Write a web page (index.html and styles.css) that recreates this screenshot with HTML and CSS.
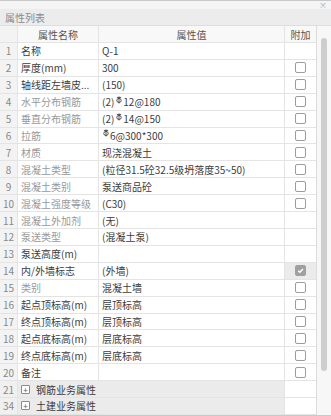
FILE: index.html
```html
<!DOCTYPE html>
<html lang="zh-CN">

<head>
    <meta charset="UTF-8">
    <meta name="viewport" content="width=device-width, initial-scale=1.0">
    <title>属性列表</title>
    <link rel="stylesheet" href="styles.css">
</head>

<body>
    <div class="panel">
        <!-- Top strip with close button -->
        <div class="panel-top">
            <span class="close-btn">×</span>
        </div>

        <!-- Title bar -->
        <div class="panel-title">属性列表</div>

        <div class="panel-body">
            <div class="grid">
                <!-- Header -->
                <div class="row head">
                    <div class="cell idx"></div>
                    <div class="cell name">属性名称</div>
                    <div class="cell value">属性值</div>
                    <div class="cell extra">附加</div>
                </div>

                <div class="rows">
                    <div class="row">
                        <div class="cell idx">1</div>
                        <div class="cell name">名称</div>
                        <div class="cell value">Q-1</div>
                        <div class="cell extra"></div>
                    </div>
                    <div class="row">
                        <div class="cell idx">2</div>
                        <div class="cell name">厚度(mm)</div>
                        <div class="cell value">300</div>
                        <div class="cell extra"><span class="check"></span></div>
                    </div>
                    <div class="row">
                        <div class="cell idx">3</div>
                        <div class="cell name">轴线距左墙皮...</div>
                        <div class="cell value">(150)</div>
                        <div class="cell extra"><span class="check"></span></div>
                    </div>
                    <div class="row">
                        <div class="cell idx">4</div>
                        <div class="cell name public">水平分布钢筋</div>
                        <div class="cell value">(2)<svg class="bar-sym" viewBox="0 0 7 9"><path d="M3.5 0.5v8M1 1.5h5" /><ellipse cx="3.5" cy="5" rx="2.6" ry="2.4" /></svg>12@180</div>
                        <div class="cell extra"><span class="check"></span></div>
                    </div>
                    <div class="row">
                        <div class="cell idx">5</div>
                        <div class="cell name public">垂直分布钢筋</div>
                        <div class="cell value">(2)<svg class="bar-sym" viewBox="0 0 7 9"><path d="M3.5 0.5v8M1 1.5h5" /><ellipse cx="3.5" cy="5" rx="2.6" ry="2.4" /></svg>14@150</div>
                        <div class="cell extra"><span class="check"></span></div>
                    </div>
                    <div class="row">
                        <div class="cell idx">6</div>
                        <div class="cell name public">拉筋</div>
                        <div class="cell value"><svg class="bar-sym lead" viewBox="0 0 7 9"><path d="M3.5 0.5v8M1 1.5h5" /><ellipse cx="3.5" cy="5" rx="2.6" ry="2.4" /></svg>6@300*300</div>
                        <div class="cell extra"><span class="check"></span></div>
                    </div>
                    <div class="row">
                        <div class="cell idx">7</div>
                        <div class="cell name public">材质</div>
                        <div class="cell value">现浇混凝土</div>
                        <div class="cell extra"><span class="check"></span></div>
                    </div>
                    <div class="row">
                        <div class="cell idx">8</div>
                        <div class="cell name public">混凝土类型</div>
                        <div class="cell value">(粒径31.5砼32.5级坍落度35~50)</div>
                        <div class="cell extra"><span class="check"></span></div>
                    </div>
                    <div class="row">
                        <div class="cell idx">9</div>
                        <div class="cell name public">混凝土类别</div>
                        <div class="cell value">泵送商品砼</div>
                        <div class="cell extra"><span class="check"></span></div>
                    </div>
                    <div class="row">
                        <div class="cell idx">10</div>
                        <div class="cell name public">混凝土强度等级</div>
                        <div class="cell value">(C30)</div>
                        <div class="cell extra"><span class="check"></span></div>
                    </div>
                    <div class="row">
                        <div class="cell idx">11</div>
                        <div class="cell name public">混凝土外加剂</div>
                        <div class="cell value">(无)</div>
                        <div class="cell extra"></div>
                    </div>
                    <div class="row">
                        <div class="cell idx">12</div>
                        <div class="cell name public">泵送类型</div>
                        <div class="cell value">(混凝土泵)</div>
                        <div class="cell extra"></div>
                    </div>
                    <div class="row">
                        <div class="cell idx">13</div>
                        <div class="cell name">泵送高度(m)</div>
                        <div class="cell value"></div>
                        <div class="cell extra"></div>
                    </div>
                    <div class="row">
                        <div class="cell idx">14</div>
                        <div class="cell name">内/外墙标志</div>
                        <div class="cell value">(外墙)</div>
                        <div class="cell extra locked"><span class="check checked"><svg viewBox="0 0 10 10"><path d="M2.5 5.2l1.8 1.8 3.4-3.6" /></svg></span></div>
                    </div>
                    <div class="row">
                        <div class="cell idx">15</div>
                        <div class="cell name public">类别</div>
                        <div class="cell value">混凝土墙</div>
                        <div class="cell extra"><span class="check"></span></div>
                    </div>
                    <div class="row">
                        <div class="cell idx">16</div>
                        <div class="cell name">起点顶标高(m)</div>
                        <div class="cell value">层顶标高</div>
                        <div class="cell extra"><span class="check"></span></div>
                    </div>
                    <div class="row">
                        <div class="cell idx">17</div>
                        <div class="cell name">终点顶标高(m)</div>
                        <div class="cell value">层顶标高</div>
                        <div class="cell extra"><span class="check"></span></div>
                    </div>
                    <div class="row">
                        <div class="cell idx">18</div>
                        <div class="cell name">起点底标高(m)</div>
                        <div class="cell value">层底标高</div>
                        <div class="cell extra"><span class="check"></span></div>
                    </div>
                    <div class="row">
                        <div class="cell idx">19</div>
                        <div class="cell name">终点底标高(m)</div>
                        <div class="cell value">层底标高</div>
                        <div class="cell extra"><span class="check"></span></div>
                    </div>
                    <div class="row">
                        <div class="cell idx">20</div>
                        <div class="cell name">备注</div>
                        <div class="cell value"></div>
                        <div class="cell extra"><span class="check"></span></div>
                    </div>

                    <!-- Collapsed groups -->
                    <div class="row group">
                        <div class="cell idx">21</div>
                        <div class="cell group-name"><span class="expand">+</span>钢筋业务属性</div>
                        <div class="cell extra"></div>
                    </div>
                    <div class="row group">
                        <div class="cell idx">34</div>
                        <div class="cell group-name"><span class="expand">+</span>土建业务属性</div>
                        <div class="cell extra"></div>
                    </div>
                </div>
            </div>

            <!-- Vertical scrollbar -->
            <div class="scrollbar">
                <div class="thumb"></div>
            </div>
        </div>
    </div>
</body>

</html>
```

FILE: styles.css
```css
body {
    margin: 0;
    padding: 0;
    background-color: #ffffff;
    font-family: "Noto Sans CJK SC", "Noto Sans", sans-serif;
    font-size: 10px;
    color: #3c3c3c;
}

.panel {
    width: 331px;
    height: 416px;
    box-sizing: border-box;
    border-top: 1px solid #c9c9c9;
    border-bottom: 1px solid #c9c9c9;
    display: flex;
    flex-direction: column;
    overflow: hidden;
}

.panel-top {
    height: 8px;
    background-color: #f4f4f4;
    display: flex;
    justify-content: flex-end;
    align-items: center;
    padding-right: 4px;
}

.close-btn {
    font-size: 8px;
    line-height: 8px;
    color: #a8a8a8;
}

.panel-title {
    height: 17px;
    line-height: 17px;
    padding-left: 5px;
    background-color: #ececec;
    color: #8a8a8a;
    border-bottom: 1px solid #dedede;
    box-sizing: border-box;
}

.panel-body {
    flex: 1;
    display: flex;
    min-height: 0;
}

.grid {
    width: 317px;
    display: flex;
    flex-direction: column;
    border-right: 1px solid #dcdcdc;
    box-sizing: border-box;
}

.rows {
    flex: 1;
    display: flex;
    flex-direction: column;
}

.row {
    display: flex;
    flex: 1 1 0;
    min-height: 0;
    border-bottom: 1px solid #e4e4e4;
    box-sizing: border-box;
}

.row.head {
    flex: 0 0 17px;
    background-color: #f8f8f8;
    color: #555555;
}

.cell {
    display: flex;
    align-items: center;
    border-right: 1px solid #e4e4e4;
    box-sizing: border-box;
    white-space: nowrap;
    overflow: hidden;
}

.cell.idx {
    width: 18px;
    justify-content: center;
    background-color: #f3f3f3;
    color: #888888;
}

.cell.name {
    width: 81px;
    padding-left: 3px;
}

.cell.name.public {
    color: #999999;
}

.cell.value {
    width: 186px;
    padding-left: 3px;
}

.cell.extra {
    width: 31px;
    justify-content: center;
    border-right: none;
}

.head .cell.name,
.head .cell.value {
    justify-content: center;
    padding-left: 0;
}

.bar-sym {
    width: 6px;
    height: 8px;
    margin: 0 1px 4px 2px;
    fill: none;
    stroke: #3c3c3c;
    stroke-width: 1;
}

.bar-sym.lead {
    margin-left: 1px;
}

.check {
    width: 11px;
    height: 11px;
    box-sizing: border-box;
    border: 1px solid #9c9c9c;
    border-radius: 2px;
    background-color: #ffffff;
    display: flex;
}

.check.checked {
    background-color: #a0a0a0;
    border-color: #a0a0a0;
}

.check svg {
    width: 9px;
    height: 9px;
    fill: none;
    stroke: #ffffff;
    stroke-width: 1.6;
}

.cell.locked {
    background-color: #ebebeb;
}

.row.group .cell.idx {
    background-color: #f0f0f0;
}

.group-name {
    width: 267px;
    padding-left: 3px;
    background-color: #ebebeb;
}

.expand {
    width: 9px;
    height: 9px;
    box-sizing: border-box;
    border: 1px solid #8a8a8a;
    border-radius: 1px;
    background-color: #ffffff;
    font-size: 8px;
    line-height: 7px;
    text-align: center;
    color: #555555;
    margin-right: 6px;
}

.scrollbar {
    width: 14px;
    background-color: #f7f7f7;
    padding: 12px 0 0 4px;
    box-sizing: border-box;
}

.thumb {
    width: 6px;
    height: 333px;
    border-radius: 3px;
    background-color: #cdcdcd;
}
```
